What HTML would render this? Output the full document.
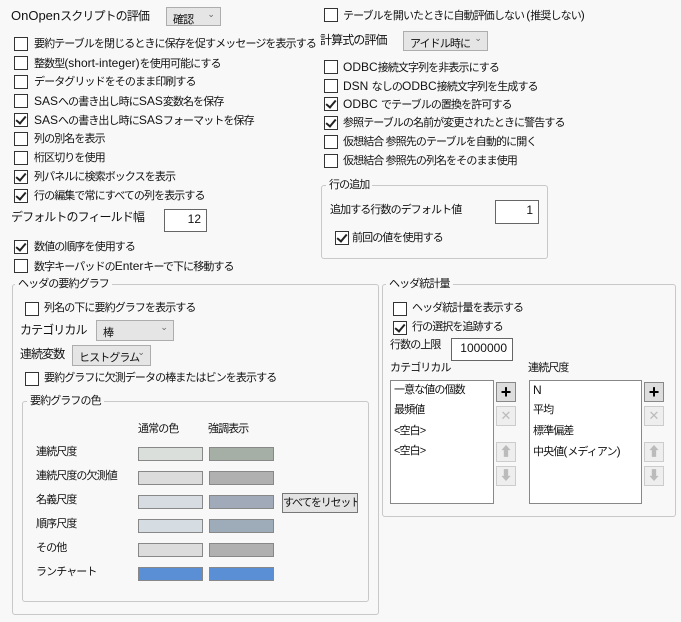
<!DOCTYPE html><html><head><meta charset="utf-8"><style>
body{margin:0;width:681px;height:622px;background:#f8f8f8;font-family:"Liberation Sans","Noto Sans CJK JP",sans-serif;font-size:11px;letter-spacing:-0.9px;color:#111;position:relative;overflow:hidden}
.l{font-size:12px;letter-spacing:0}
.a{position:absolute;white-space:nowrap;line-height:14px}
.cb{position:absolute;width:12px;height:12px;border:1px solid #333;background:#fff}
.cb.c::after{content:"";position:absolute;left:3px;top:0px;width:4px;height:8px;border:solid #222;border-width:0 2px 2px 0;transform:rotate(40deg)}
.dd{position:absolute;border:1px solid #adadad;background:#e5e5e5;box-sizing:border-box;white-space:nowrap}
.dd span{position:absolute;left:6px;top:3px}
.dd i{position:absolute;right:6px;top:1px;font-style:normal;font-size:9px;color:#666}
.box{position:absolute;border:1px solid #666;background:#fff;box-sizing:border-box;text-align:right;padding:2px 5px 0 0;font-size:12px;letter-spacing:0}
.grp{position:absolute;border:1px solid #c8c8c8;border-radius:3px;box-sizing:border-box}
.lg{position:absolute;background:#f8f8f8;padding:0 3px;line-height:14px;white-space:nowrap}
.sw{position:absolute;width:65px;height:14px;border:1px solid #888;box-sizing:border-box}
.lst{position:absolute;border:1px solid #888;background:#fff;box-sizing:border-box}
.bt{position:absolute;width:20px;height:20px;box-sizing:border-box;border:1px solid #ccc;background:#eee;color:#bbb;text-align:center;line-height:18px;font-size:13px;letter-spacing:0}
</style></head><body>
<div class="a" style="left:11px;top:9px;font-size:12px"><span class="l" style="font-size:13px">OnOpen</span>スクリプトの評価</div>
<div class="dd" style="left:166px;top:7px;width:55px;height:19px"><span>確認</span><i>⌄</i></div>
<div class="cb" style="left:14px;top:37px"></div><div class="a" style="left:34px;top:37px">要約テーブルを閉じるときに保存を促すメッセージを表示する</div>
<div class="cb" style="left:14px;top:56px"></div><div class="a" style="left:34px;top:56px">整数型<span class="l">(short-integer)</span>を使用可能にする</div>
<div class="cb" style="left:14px;top:75px"></div><div class="a" style="left:34px;top:75px">データグリッドをそのまま印刷する</div>
<div class="cb" style="left:14px;top:94px"></div><div class="a" style="left:34px;top:94px"><span class="l">SAS</span>への書き出し時に<span class="l">SAS</span>変数名を保存</div>
<div class="cb c" style="left:14px;top:113px"></div><div class="a" style="left:34px;top:113px"><span class="l">SAS</span>への書き出し時に<span class="l">SAS</span>フォーマットを保存</div>
<div class="cb" style="left:14px;top:132px"></div><div class="a" style="left:34px;top:132px">列の別名を表示</div>
<div class="cb" style="left:14px;top:151px"></div><div class="a" style="left:34px;top:151px">桁区切りを使用</div>
<div class="cb c" style="left:14px;top:170px"></div><div class="a" style="left:34px;top:170px">列パネルに検索ボックスを表示</div>
<div class="cb c" style="left:14px;top:189px"></div><div class="a" style="left:34px;top:189px">行の編集で常にすべての列を表示する</div>
<div class="a" style="left:11px;top:210px;font-size:12px">デフォルトのフィールド幅</div>
<div class="box" style="left:164px;top:209px;width:43px;height:23px">12</div>
<div class="cb c" style="left:14px;top:240px"></div><div class="a" style="left:34px;top:240px">数値の順序を使用する</div>
<div class="cb" style="left:14px;top:259px"></div><div class="a" style="left:34px;top:259px">数字キーパッドの<span class="l">Enter</span>キーで下に移動する</div>

<div class="grp" style="left:12px;top:284px;width:367px;height:331px"></div>
<div class="lg" style="left:15px;top:277px">ヘッダの要約グラフ</div>
<div class="cb" style="left:25px;top:302px"></div><div class="a" style="left:44px;top:301px">列名の下に要約グラフを表示する</div>
<div class="a" style="left:20px;top:323px;font-size:12px">カテゴリカル</div>
<div class="dd" style="left:96px;top:320px;width:78px;height:21px"><span>棒</span><i>⌄</i></div>
<div class="a" style="left:20px;top:347px;font-size:12px">連続変数</div>
<div class="dd" style="left:72px;top:345px;width:79px;height:21px"><span>ヒストグラム</span><i>⌄</i></div>
<div class="cb" style="left:25px;top:372px"></div><div class="a" style="left:44px;top:371px">要約グラフに欠測データの棒またはビンを表示する</div>
<div class="grp" style="left:22px;top:401px;width:347px;height:201px"></div>
<div class="lg" style="left:27px;top:394px">要約グラフの色</div>
<div class="a" style="left:138px;top:422px">通常の色</div><div class="a" style="left:208px;top:422px">強調表示</div>
<div class="a" style="left:36px;top:445px">連続尺度</div><div class="sw" style="left:138px;top:447px;background:#dadfdb"></div><div class="sw" style="left:209px;top:447px;background:#a5afa5"></div>
<div class="a" style="left:36px;top:469px">連続尺度の欠測値</div><div class="sw" style="left:138px;top:471px;background:#dcdcdc"></div><div class="sw" style="left:209px;top:471px;background:#b0b0b0"></div>
<div class="a" style="left:36px;top:493px">名義尺度</div><div class="sw" style="left:138px;top:495px;background:#d7dce3"></div><div class="sw" style="left:209px;top:495px;background:#a0aab9"></div>
<div style="position:absolute;left:282px;top:493px;width:76px;height:20px;border:1px solid #777;background:#e3e3e3;box-sizing:border-box;line-height:18px;text-align:center;white-space:nowrap;overflow:hidden;letter-spacing:-1.2px">すべてをリセット</div>
<div class="a" style="left:36px;top:517px">順序尺度</div><div class="sw" style="left:138px;top:519px;background:#d5dde3"></div><div class="sw" style="left:209px;top:519px;background:#9eabb8"></div>
<div class="a" style="left:36px;top:541px">その他</div><div class="sw" style="left:138px;top:543px;background:#dcdcdc"></div><div class="sw" style="left:209px;top:543px;background:#b0b0b0"></div>
<div class="a" style="left:36px;top:565px">ランチャート</div><div class="sw" style="left:138px;top:567px;background:#5a8fd6"></div><div class="sw" style="left:209px;top:567px;background:#5a8fd6"></div>

<div class="cb" style="left:324px;top:8px"></div><div class="a" style="left:343px;top:8px">テーブルを開いたときに自動評価しない <span class="l">(</span>推奨しない<span class="l">)</span></div>
<div class="a" style="left:320px;top:33px;font-size:12px">計算式の評価</div>
<div class="dd" style="left:403px;top:31px;width:85px;height:20px"><span>アイドル時に</span><i>⌄</i></div>
<div class="cb" style="left:324px;top:60px"></div><div class="a" style="left:343px;top:60px"><span class="l">ODBC</span>接続文字列を非表示にする</div>
<div class="cb" style="left:324px;top:79px"></div><div class="a" style="left:343px;top:79px"><span class="l">DSN </span>なしの<span class="l">ODBC</span>接続文字列を生成する</div>
<div class="cb c" style="left:324px;top:97px"></div><div class="a" style="left:343px;top:97px"><span class="l">ODBC </span>でテーブルの置換を許可する</div>
<div class="cb c" style="left:324px;top:116px"></div><div class="a" style="left:343px;top:116px">参照テーブルの名前が変更されたときに警告する</div>
<div class="cb" style="left:324px;top:135px"></div><div class="a" style="left:343px;top:135px">仮想結合 参照先のテーブルを自動的に開く</div>
<div class="cb" style="left:324px;top:154px"></div><div class="a" style="left:343px;top:154px">仮想結合 参照先の列名をそのまま使用</div>
<div class="grp" style="left:321px;top:185px;width:227px;height:74px"></div>
<div class="lg" style="left:326px;top:178px">行の追加</div>
<div class="a" style="left:330px;top:203px">追加する行数のデフォルト値</div>
<div class="box" style="left:495px;top:200px;width:44px;height:24px">1</div>
<div class="cb c" style="left:335px;top:231px"></div><div class="a" style="left:352px;top:231px">前回の値を使用する</div>

<div class="grp" style="left:382px;top:284px;width:294px;height:233px"></div>
<div class="lg" style="left:386px;top:277px">ヘッダ統計量</div>
<div class="cb" style="left:393px;top:302px"></div><div class="a" style="left:412px;top:301px">ヘッダ統計量を表示する</div>
<div class="cb c" style="left:393px;top:321px"></div><div class="a" style="left:412px;top:320px">行の選択を追跡する</div>
<div class="a" style="left:390px;top:338px">行数の上限</div>
<div class="box" style="left:451px;top:338px;width:62px;height:23px">1000000</div>
<div class="a" style="left:390px;top:361px">カテゴリカル</div>
<div class="a" style="left:528px;top:361px">連続尺度</div>
<div class="lst" style="left:390px;top:380px;width:104px;height:124px"></div>
<div class="a" style="left:394px;top:383px">一意な値の個数</div><div class="a" style="left:394px;top:403px">最頻値</div><div class="a" style="left:394px;top:424px">&lt;空白&gt;</div><div class="a" style="left:394px;top:444px">&lt;空白&gt;</div>
<div class="lst" style="left:529px;top:380px;width:113px;height:124px"></div>
<div class="a" style="left:533px;top:383px"><span class="l">N</span></div><div class="a" style="left:533px;top:403px">平均</div><div class="a" style="left:533px;top:424px">標準偏差</div><div class="a" style="left:533px;top:444px">中央値<span class="l">(</span>メディアン<span class="l">)</span></div>
<div class="bt" style="left:496px;top:382px;border-color:#888;background:#ddd;color:#000;font-weight:bold;font-size:18px">+</div>
<div class="bt" style="left:496px;top:406px">✕</div><div class="bt" style="left:496px;top:442px">⬆</div><div class="bt" style="left:496px;top:466px">⬇</div>
<div class="bt" style="left:644px;top:382px;border-color:#888;background:#ddd;color:#000;font-weight:bold;font-size:18px">+</div>
<div class="bt" style="left:644px;top:406px">✕</div><div class="bt" style="left:644px;top:442px">⬆</div><div class="bt" style="left:644px;top:466px">⬇</div>
</body></html>
